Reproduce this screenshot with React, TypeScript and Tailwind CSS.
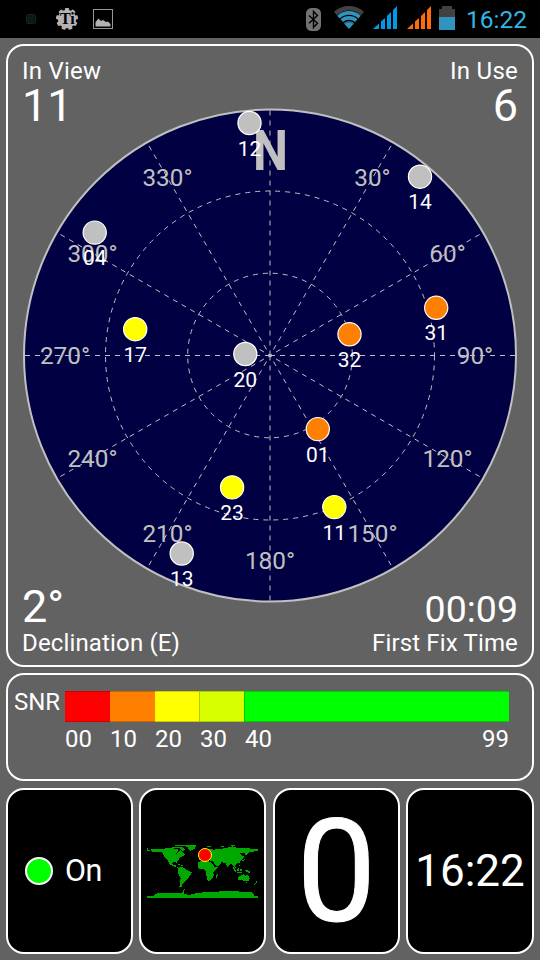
const satellites = [
  { id: "12", x: 249.5, y: 123, snr: 0 },
  { id: "14", x: 420, y: 176.7, snr: 0 },
  { id: "04", x: 94.7, y: 232.6, snr: 0 },
  { id: "17", x: 135.2, y: 329.2, snr: 20 },
  { id: "31", x: 436.2, y: 307.8, snr: 10 },
  { id: "32", x: 349.5, y: 334.3, snr: 10 },
  { id: "20", x: 245.3, y: 354, snr: 0 },
  { id: "01", x: 317.8, y: 429.1, snr: 10 },
  { id: "23", x: 232.1, y: 487.4, snr: 20 },
  { id: "11", x: 334.3, y: 507.1, snr: 20 },
  { id: "13", x: 181.7, y: 553.5, snr: 0 },
];

const snrFill: Record<number, string> = { 0: "#c0c0c0", 10: "#ff8000", 20: "#ffff00" };

const bearings = [30, 60, 90, 120, 150, 180, 210, 240, 270, 300, 330];
const spokes = [0, ...bearings];

const snrSegments = [
  { label: "00", className: "w-[45px] bg-[#ff0000]" },
  { label: "10", className: "w-[45px] bg-[#ff8000]" },
  { label: "20", className: "w-[44px] bg-[#ffff00]" },
  { label: "30", className: "w-[45px] bg-[#d8ff00] border-l border-l-black/20" },
  { label: "40", className: "flex-1 bg-[#00ff00] border-l border-l-black/20" },
];

const CX = 270;
const CY = 355.5;
const R = 246;

function polar(deg: number, r: number) {
  const a = (deg * Math.PI) / 180;
  return { x: CX + r * Math.sin(a), y: CY - r * Math.cos(a) };
}

function GearIcon() {
  const teeth = Array.from({ length: 9 }, (_, i) => i * 40);
  return (
    <svg className="ml-5" width="22" height="22" viewBox="-11 -11 22 22">
      <g fill="#b5b2b5">
        <circle r="9.2" />
        {teeth.map((t) => (
          <rect key={t} x="-2.1" y="-11" width="4.2" height="5" rx="1" transform={`rotate(${t})`} />
        ))}
      </g>
      <text x="0.3" y="5.4" textAnchor="middle" fontSize="16" fontWeight="700" fill="#000" className="font-['Liberation_Serif',serif]">
        Ti
      </text>
    </svg>
  );
}

function SignalIcon({ color, className }: { color: string; className: string }) {
  return (
    <svg className={className} width="24" height="23" viewBox="0 0 24 23" fill={color}>
      <path d="M0 23 L6 17.5 V23Z M8 15.5 L12 12 V23 H8Z M14 10 L18 6 V23 H14Z M20 4 L24 0 V23 H20Z" />
    </svg>
  );
}

function StatusBar() {
  return (
    <div className="flex h-[38px] items-start bg-black pl-[26px] pr-[13px] pt-1.5 text-[#33b5e5]">
      <svg className="mt-2" width="10" height="10" viewBox="0 0 10 10">
        <rect x=".5" y=".5" width="9" height="9" rx="2" fill="#0b150d" stroke="#142a1a" />
        <path d="M2 5 L5 2 M2 8 L8 2 M5 8 L8 5" stroke="#1c3a24" strokeDasharray="1 1" />
      </svg>
      <div className="mt-0.5 flex">
        <GearIcon />
      </div>
      <svg className="ml-[15px] mt-[3px]" width="20" height="20" viewBox="0 0 20 20">
        <rect x=".5" y=".5" width="19" height="19" fill="none" stroke="#8f9a94" />
        <path d="M2.5 17.5 V13 L5.5 9.5 L8 12 L10 11 L13 13 L15 12.5 L17.5 15 V17.5Z" fill="#b5b2b5" />
      </svg>

      <div className="flex-1" />

      <svg className="mt-0.5" width="15" height="23" viewBox="0 0 15 23">
        <rect width="15" height="23" rx="5.5" fill="#737173" />
        <path d="M3 7.5 L11.5 15.2 L7.5 19.5 V3.5 L11.5 7.5 L3 15.2" fill="none" stroke="#000" strokeWidth="1.4" />
      </svg>
      <svg className="ml-[13px]" width="30" height="23" viewBox="0 0 30 23">
        <path d="M0 5.8 A22 22 0 0 1 30 5.8 L27.3 9.3 A18 18 0 0 0 2.7 9.3Z" fill="#424142" />
        <path d="M3.2 9.7 A17.5 17.5 0 0 1 26.8 9.7 L24.3 12.4 A14 14 0 0 0 5.7 12.4Z" fill="#3194bd" />
        <path d="M6.5 13.3 A12.6 12.6 0 0 1 23.5 13.3 L21 16 A9 9 0 0 0 9 16Z" fill="#3194bd" />
        <path d="M9.8 17.2 A7.8 7.8 0 0 1 20.2 17.2 L15 23Z" fill="#3194bd" />
        <path d="M10 18.2 A7.5 7.5 0 0 1 20 18.2" fill="none" stroke="#1c4a63" strokeWidth=".6" />
      </svg>
      <SignalIcon color="#0099e5" className="ml-[9px]" />
      <SignalIcon color="#ff6b08" className="ml-[10px]" />
      <svg className="ml-2" width="16" height="24" viewBox="0 0 16 24">
        <path d="M3 3 V0 H13 V3 H16 V11 H0 V3Z" fill="#424142" />
        <rect y="11" width="16" height="13" fill="#3194bd" />
      </svg>
      <span className="ml-[11px] text-[24.5px] leading-[27px]">16:22</span>
    </div>
  );
}

function SkyPlot() {
  return (
    <svg className="[grid-area:1/1]" width="524" height="619" viewBox="8 46 524 619">
      <circle cx={CX} cy={CY} r={R} fill="#000042" stroke="#c0c0c0" strokeWidth="2" />
      <g fill="none" stroke="#c0c0c0" strokeWidth="1" strokeDasharray="5 5">
        <circle cx={CX} cy={CY} r="82.3" />
        <circle cx={CX} cy={CY} r="164.5" />
        {spokes.map((deg) => {
          const end = polar(deg, R);
          return (
            <line key={deg} x1={CX} y1={CY} x2={end.x} y2={end.y} strokeDashoffset={deg % 90 === 0 ? 0 : 3} />
          );
        })}
      </g>
      <g fill="#c0c0c0" textAnchor="middle">
        <text x="257.5" y="170" fontSize="55" fontWeight="700" textLength="35" lengthAdjust="spacingAndGlyphs" textAnchor="start" dx="-4.5">
          N
        </text>
        {bearings.map((deg) => {
          const p = polar(deg, 205);
          return (
            <text key={deg} x={p.x} y={p.y + 8.5} fontSize="24.3">
              {deg}°
            </text>
          );
        })}
      </g>
      {satellites.map((sat) => (
        <g key={sat.id}>
          <circle cx={sat.x} cy={sat.y} r="11.6" fill={snrFill[sat.snr]} stroke="#fff" strokeWidth="1.2" />
          <text x={sat.x} y={sat.y + 32.5} fontSize="21" fill="#fff" textAnchor="middle">
            {sat.id}
          </text>
        </g>
      ))}
    </svg>
  );
}

function SkyPanel() {
  return (
    <section className="grid h-[623px] rounded-[18px] border-2 border-white">
      <SkyPlot />
      <div className="z-10 flex flex-col px-3.5 pb-[9px] pt-3 [grid-area:1/1]">
        <div className="flex justify-between text-[24px] leading-[26px] tracking-[0.25px]">
          <span>In View</span>
          <span>In Use</span>
        </div>
        <div className="flex justify-between text-[45px] leading-[44px]">
          <span>11</span>
          <span>6</span>
        </div>
        <div className="flex-1" />
        <div className="flex items-baseline justify-between text-[45px] leading-[46px]">
          <span>2°</span>
          <span className="text-[37.5px] leading-9">00:09</span>
        </div>
        <div className="flex justify-between text-[24px] leading-[26px] tracking-[0.15px]">
          <span>Declination (E)</span>
          <span>First Fix Time</span>
        </div>
      </div>
    </section>
  );
}

function SnrPanel() {
  return (
    <section className="mt-1.5 flex h-[108px] rounded-[18px] border-2 border-white pt-4 text-[24px]">
      <span className="w-[57px] pl-1.5 leading-[22px]">SNR</span>
      <div className="w-[444px]">
        <div className="flex h-[31px]">
          {snrSegments.map((seg) => (
            <div key={seg.label} className={`border-y border-y-black/20 ${seg.className}`} />
          ))}
        </div>
        <div className="flex pt-1 leading-[26px]">
          <span className="w-[45px]">00</span>
          <span className="w-[45px]">10</span>
          <span className="w-[45px]">20</span>
          <span className="w-[45px]">30</span>
          <span className="flex-1">40</span>
          <span>99</span>
        </div>
      </div>
    </section>
  );
}

function WorldMap() {
  return (
    <svg className="mt-[3px] shrink-0" width="125" height="75" viewBox="0 0 375 225">
      <g fill="#00a800" shapeRendering="crispEdges">
        {/* north america and greenland */}
        <path d="M33 42 H72 L78 40 H96 L108 41 L116 45 L112 52 L106 54 L110 58 L118 50 L122 44 L128 52 L135 57 L130 63 L122 66 L117 72 L112 79 L110 84 L107 80 L98 81 L97 86 L100 91 L106 90 L108 94 L115 98 L108 97 L98 92 L90 88 L84 78 L77 71 L71 60 L66 52 L55 50 L48 51 L38 52 L33 48Z" />
        <path d="M105 30 H168 L165 40 L157 44 L150 48 L146 44 L142 36 L134 33 H105Z M96 35 H118 V39 H96Z M118 36 H126 L134 44 L130 48 L120 42Z M21 39 H24 V45 H29 V48 H21Z M113 87 H120 V90 H113Z M122 90 H130 V93 H122Z" />
        {/* south america */}
        <path d="M116 97 L125 96 L132 99 L140 105 L155 112 L150 122 L145 130 L137 137 L131 144 L126 150 L124 157 L118 156 L120 145 L122 130 L116 118 L114 108Z" />
        {/* africa */}
        <path d="M174 83 L180 79 L195 77 L204 79 L214 82 L221 90 L224 97 H233 L227 106 L220 113 L221 123 L214 134 L206 139 L201 134 L199 120 L197 108 L190 101 L180 102 L173 96Z M228 120 L233 116 V123 L230 128 H228Z" />
        {/* europe and asia */}
        <path d="M176 76 L178 69 L186 64 L194 54 L206 40 L220 44 L240 42 L260 39 L278 34 L294 40 L320 40 L354 42 V49 L330 50 L324 55 L318 62 L314 60 L316 53 L300 55 L304 60 L314 66 L307 74 L302 78 L298 84 L290 86 L285 92 L288 99 L280 94 L276 88 L270 87 L262 97 L258 86 L248 82 L240 80 L244 86 L236 92 L230 95 L222 84 L220 78 L212 77 L206 76 L200 72 L190 70Z" />
        <path d="M244 33 H253 V36 H244Z M272 30 H284 V33 H272Z M200 33 H212 V36 H200Z M312 72 H315 V75 H312Z M309 75 H312 V79 H306 V76Z M297 89 H300 V93 H297Z" />
        {/* indonesia, australia, new zealand */}
        <path d="M278 97 H281 L289 108 V111 H286Z M291 102 L298 97 V108 H292Z M300 102 H305 V108 H300Z M290 111 H305 V114 H290Z M312 104 H318 L330 110 V114 L320 112Z M293 126 L303 121 L312 118 L318 123 L322 118 L329 130 L325 138 L316 139 L306 135 L294 136Z M317 142 H321 V145 H317Z M349 139 H352 V143 L345 149 H342 L349 142Z" />
        {/* antarctica */}
        <path d="M21 183 H42 L45 178 L55 174 H100 L126 175 L128 168 L133 163 H135 L131 171 V178 L150 179 L170 174 L200 171 L230 170 L280 167 L300 170 L335 171 L340 176 L343 183 H354 V188 H21Z" />
      </g>
      <circle cx="195" cy="60" r="19.5" fill="#ff0000" stroke="#ffff00" strokeWidth="3" />
    </svg>
  );
}

const tile = "flex h-[166px] items-center rounded-[18px] border-2 border-white bg-black";

export default function App() {
  return (
    <div className="h-[960px] w-[540px] overflow-hidden bg-[#626262] font-['Roboto',sans-serif] text-white">
      <StatusBar />
      <main className="p-1.5">
        <SkyPanel />
        <SnrPanel />
        <div className="mt-[7px] flex gap-1.5">
          <div className={`${tile} w-[127px] pl-[17px]`}>
            <span className="size-7 rounded-full border-2 border-white bg-[#00ff00]" />
            <span className="ml-3 text-[30.5px] leading-8 tracking-[-0.5px]">On</span>
          </div>
          <div className={`${tile} w-[127px] justify-center`}>
            <WorldMap />
          </div>
          <div className={`${tile} ml-px w-[127px] justify-center pt-1`}>
            <span className="text-[142px] leading-[144px] [-webkit-text-stroke:1px_white]">0</span>
          </div>
          <div className={`${tile} w-[128px] justify-center pt-px`}>
            <span className="text-[44px] leading-[45px]">16:22</span>
          </div>
        </div>
      </main>
    </div>
  );
}
